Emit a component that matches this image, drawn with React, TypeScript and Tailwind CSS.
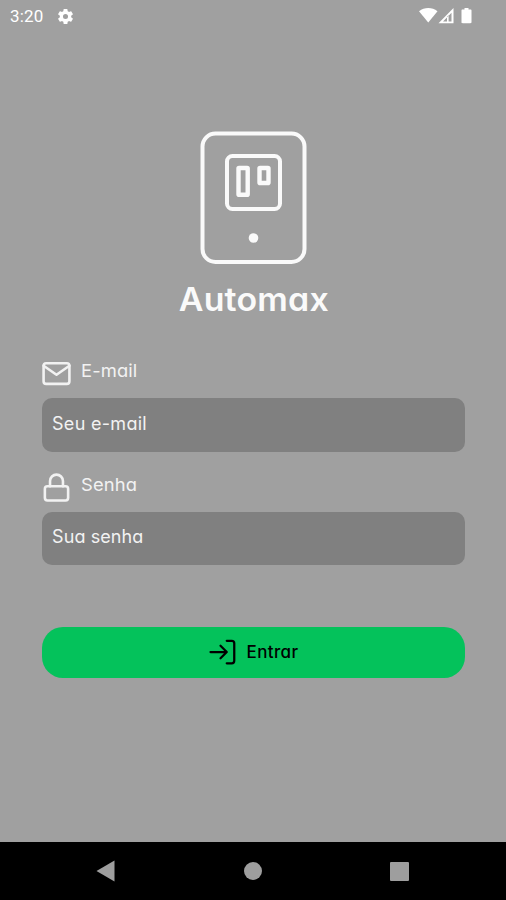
import React from "react";

const featherProps = {
  viewBox: "0 0 24 24",
  fill: "none",
  stroke: "currentColor",
  strokeWidth: 2,
  strokeLinecap: "round" as const,
  strokeLinejoin: "round" as const,
};

function StatusBar() {
  return (
    <header className="flex h-8 items-center justify-between pl-[10px] pr-[32px] text-white">
      <div className="flex items-center gap-[12px]">
        <span className="font-['Roboto','Liberation_Sans',sans-serif] text-[17px] leading-8 tracking-[0.2px]">3:20</span>
        <svg className="size-[19px]" viewBox="0 0 24 24" fill="currentColor">
          <path d="M19.14 12.94a7.5 7.5 0 0 0 0-1.88l2.03-1.58a.5.5 0 0 0 .12-.61l-1.92-3.32a.5.5 0 0 0-.59-.22l-2.39.96a7 7 0 0 0-1.62-.94l-.36-2.54A.5.5 0 0 0 13.92 2.4h-3.84a.5.5 0 0 0-.47.41l-.36 2.54a7 7 0 0 0-1.62.94l-2.39-.96a.5.5 0 0 0-.59.22L2.74 8.87a.5.5 0 0 0 .12.61l2.03 1.58a7.5 7.5 0 0 0 0 1.88l-2.03 1.58a.5.5 0 0 0-.12.61l1.92 3.32a.5.5 0 0 0 .59.22l2.39-.96a7 7 0 0 0 1.62.94l.36 2.54a.5.5 0 0 0 .47.41h3.84a.5.5 0 0 0 .47-.41l.36-2.54a7 7 0 0 0 1.62-.94l2.39.96a.5.5 0 0 0 .59-.22l1.92-3.32a.5.5 0 0 0-.12-.61zM12 15.2a3.2 3.2 0 1 1 0-6.4 3.2 3.2 0 0 1 0 6.4z" />
        </svg>
      </div>
      <svg className="h-4 w-[55px]" viewBox="0 0 55 16" fill="currentColor">
        <path d="M0 3.2C5.5-1 13-1 18.5 3.2L9.250 14.500z" />
        <path d="M34.500 0v15.200H19.500zM32.500 4.800L24 13.400H28V8.800l1.600-1.600V13.400H32.500z" fillRule="evenodd" />
        <path d="M45.500 0h4v1.500h2c.7 0 1 .4 1 1v11.500c0 .8-.4 1.200-1.200 1.200h-7.600c-.8 0-1.200-.4-1.200-1.200V2.500c0-.6.300-1 1-1h2z" />
      </svg>
    </header>
  );
}

function Logo() {
  return (
    <svg className="h-[134px] w-[108px]" viewBox="0 0 108 134" fill="none" stroke="#fafafa" strokeWidth="4">
      <rect x="2.500" y="3.500" width="102" height="128.500" rx="13" />
      <rect x="27" y="26" width="53" height="53" rx="5.500" />
      <g strokeWidth="4.400">
        <rect x="38.500" y="38" width="9.200" height="26.800" rx=".6" />
        <rect x="59.500" y="38" width="9" height="15" rx=".6" />
      </g>
      <circle cx="53.500" cy="108" r="4.800" fill="#fafafa" stroke="none" />
    </svg>
  );
}

function MailIcon() {
  return (
    <svg {...featherProps} className="size-[31px]">
      <path d="M4 4h16c1.100 0 2 .9 2 2v12c0 1.100-.9 2-2 2H4c-1.100 0-2-.9-2-2V6c0-1.100.9-2 2-2z" />
      <path d="M22 6l-10 7L2 6" />
    </svg>
  );
}

function LockIcon() {
  return (
    <svg {...featherProps} className="size-[31px]">
      <rect x="3" y="11" width="18" height="11" rx="2" />
      <path d="M7 11V7a5 5 0 0 1 10 0v4" />
    </svg>
  );
}

type FieldProps = {
  id: string;
  label: string;
  type: string;
  placeholder: string;
  icon: React.ReactNode;
  labelClass: string;
  inputClass: string;
};

function Field({ id, label, type, placeholder, icon, labelClass, inputClass }: FieldProps) {
  return (
    <div className="flex flex-col">
      <label htmlFor={id} className="-ml-px flex h-[40px] items-start text-[#f2f2f2]">
        {icon}
        <span className={`ml-[9px] origin-left scale-x-[1.05] text-[17.500px] leading-[26px] ${labelClass}`}>{label}</span>
      </label>
      <input
        id={id}
        type={type}
        placeholder={placeholder}
        className={`w-full rounded-[10px] bg-[#808080] px-[10px] text-[18px] outline-none placeholder:text-[#f2f2f2] ${inputClass}`}
      />
    </div>
  );
}

function NavBar() {
  return (
    <nav className="flex h-[58px] items-center justify-between bg-black px-[96px] text-[#9e9e9e]">
      <svg className="h-[22px] w-5" viewBox="0 0 20 22" fill="currentColor">
        <path d="M.5 11L18.500 .5v21z" />
      </svg>
      <span className="size-[18px] rounded-full bg-[#9e9e9e]" />
      <span className="mr-[1px] size-[19px] rounded-[1px] bg-[#9e9e9e]" />
    </nav>
  );
}

export default function App() {
  return (
    <div className="flex h-[900px] w-[506px] flex-col overflow-hidden bg-[#a0a0a0] font-['Inter','Noto_Sans',sans-serif] [font-feature-settings:'cv11']">
      <StatusBar />
      <main className="flex flex-1 flex-col pt-[98px] pl-[42px] pr-[41px]">
        <div className="flex flex-col items-center">
          <Logo />
          <h1 className="mt-[14px] h-[42px] scale-x-[1.060] whitespace-nowrap text-[32px] font-semibold leading-[43px] tracking-[0.200px] text-[#fafafa]">
            Automax
          </h1>
        </div>
        <div className="mt-[38px] flex flex-col gap-[20px]">
          <Field id="email" label="E-mail" type="email" placeholder="Seu e-mail" icon={<MailIcon />} labelClass="tracking-[0.100px]" inputClass="h-[54px] pb-[4px] tracking-[0.300px]" />
          <Field id="senha" label="Senha" type="password" placeholder="Sua senha" icon={<LockIcon />} labelClass="tracking-[0.100px]" inputClass="h-[53px] pb-[5px] tracking-[0.100px]" />
        </div>
        <button className="mt-[62px] flex h-[51px] w-full items-center justify-center gap-[9px] rounded-[21px] bg-[#04c25b] pb-[2px] pr-px text-black">
          <svg {...featherProps} strokeWidth={1.8} className="size-[30px]">
            <path d="M15 3h4a2 2 0 0 1 2 2v14a2 2 0 0 1-2 2h-4" />
            <path d="M10 17l5-5-5-5M15 12H2" />
          </svg>
          <span className="text-[17px] font-medium leading-6 tracking-[0.400px]">Entrar</span>
        </button>
      </main>
      <NavBar />
    </div>
  );
}
